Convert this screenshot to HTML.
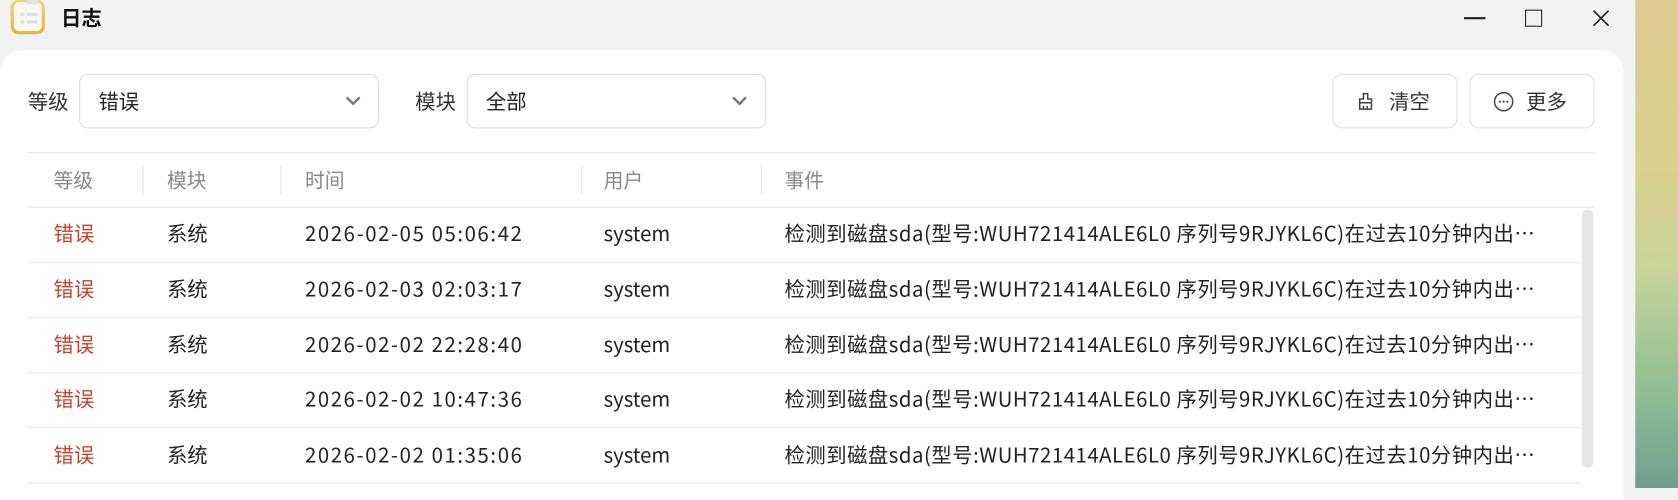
<!DOCTYPE html>
<html><head><meta charset="utf-8"><style>
html,body{margin:0;padding:0;width:1678px;height:488px;overflow:hidden;background:#f2f2f2}
#s{position:absolute;left:0;top:0;width:1568px;height:456px;transform:scale(1.0702);transform-origin:0 0;font-family:"Noto Sans CJK SC","Liberation Sans",sans-serif}
.a{position:absolute}
.wall{left:1528px;top:0;width:40px;height:456px;background:linear-gradient(180deg,#dccb92 0%,#d9cf8e 35%,#c9d39a 55%,#8fbf93 80%,#6f9e92 100%)}
.card{left:0;top:47px;width:1517px;height:420px;background:#fff;border-radius:20px 20px 0 0}
.dd{height:51px;border:1px solid #d9d9d9;border-radius:8px;background:#fff;box-sizing:border-box}
.btn{height:51px;border:1px solid #dcdcdc;border-radius:9px;box-sizing:border-box}
.t{font-size:19px;line-height:26px;color:#222;white-space:nowrap}
.h{font-size:18.5px;line-height:26px;color:#888}
.d{letter-spacing:1.5px}
.e{letter-spacing:0.5px}
.line{height:1px;background:#e8e8e8}
.div{width:1px;height:27px;top:155px;background:#e3e3e3}
.r{color:#c8402f}
</style></head><body><div id="s">
<div class="a wall"></div>
<div class="a" style="left:10px;top:0;width:32px;height:32px;border-radius:7px;background:linear-gradient(#f1d07f,#e4b34c)"></div>
<div class="a" style="left:13px;top:2px;width:26px;height:27px;border-radius:5px;background:#fbf8f2"></div>
<div class="a" style="left:24px;top:0;width:12px;height:4px;border-radius:2px;background:#dfe4ee"></div>
<div class="a" style="left:19px;top:12px;width:4px;height:3px;background:#d6ddec"></div>
<div class="a" style="left:25px;top:12px;width:10px;height:3px;background:#d6ddec"></div>
<div class="a" style="left:19px;top:19px;width:4px;height:3px;background:#d6ddec"></div>
<div class="a" style="left:25px;top:19px;width:10px;height:3px;background:#d6ddec"></div>
<div class="a" style="left:57px;top:4px;font-size:19px;line-height:26px;font-weight:bold;color:#111">日志</div>
<div class="a" style="left:1368px;top:16px;width:20px;height:2px;background:#222"></div>
<div class="a" style="left:1425px;top:9px;width:14px;height:14px;border:1.6px solid #222"></div>
<svg class="a" style="left:1488px;top:9px" width="16" height="16"><path d="M1 1L15 15M15 1L1 15" stroke="#222" stroke-width="1.6"/></svg>
<div class="a card"></div>
<div class="a t" style="left:26px;top:82px;color:#333">等级</div>
<div class="a dd" style="left:74px;top:69px;width:280px"></div>
<div class="a t" style="left:92px;top:82px">错误</div>
<svg class="a" style="left:322px;top:89px" width="16" height="10"><path d="M2 2L8 8L14 2" fill="none" stroke="#777" stroke-width="2.2"/></svg>
<div class="a t" style="left:388px;top:82px;color:#333">模块</div>
<div class="a dd" style="left:436px;top:69px;width:280px"></div>
<div class="a t" style="left:454px;top:82px">全部</div>
<svg class="a" style="left:683px;top:89px" width="16" height="10"><path d="M2 2L8 8L14 2" fill="none" stroke="#777" stroke-width="2.2"/></svg>
<div class="a btn" style="left:1245px;top:69px;width:117px"></div>
<svg class="a" style="left:1268px;top:86px" width="16" height="18"><path d="M6 1.5h4v5h3.5v9.5H2.5V6.5H6z M2.5 10h11 M6 16v-3M9.5 16v-3" fill="none" stroke="#444" stroke-width="1.4"/></svg>
<div class="a t" style="left:1298px;top:82px;color:#333">清空</div>
<div class="a btn" style="left:1373px;top:69px;width:117px"></div>
<svg class="a" style="left:1395px;top:85px" width="20" height="20"><circle cx="10" cy="10" r="8.5" fill="none" stroke="#444" stroke-width="1.4"/><circle cx="6.5" cy="10" r="1" fill="#444"/><circle cx="10" cy="10" r="1" fill="#444"/><circle cx="13.5" cy="10" r="1" fill="#444"/></svg>
<div class="a t" style="left:1426px;top:82px;color:#333">更多</div>
<div class="a line" style="left:26px;top:142px;width:1464px"></div>
<div class="a line" style="left:26px;top:193px;width:1464px;background:#e2e2e2"></div>
<div class="a div" style="left:133px"></div><div class="a div" style="left:262px"></div><div class="a div" style="left:543px"></div><div class="a div" style="left:711px"></div>
<div class="a h" style="left:50px;top:155px">等级</div>
<div class="a h" style="left:156px;top:155px">模块</div>
<div class="a h" style="left:285px;top:155px">时间</div>
<div class="a h" style="left:564px;top:155px">用户</div>
<div class="a h" style="left:733px;top:155px">事件</div>
<div class="a" style="left:1478px;top:196px;width:11px;height:241px;border-radius:6px;background:#e6e6e6"></div>

<div class="a t r" style="left:50px;top:205px">错误</div><div class="a t" style="left:156px;top:205px">系统</div><div class="a t d" style="left:285px;top:205px">2026-02-05 05:06:42</div><div class="a t" style="left:564px;top:205px">system</div><div class="a t e" style="left:733px;top:205px">检测到磁盘sda(型号:WUH721414ALE6L0 序列号9RJYKL6C)在过去10分钟内出…</div>
<div class="a line" style="left:26px;top:245px;width:1451px"></div>
<div class="a t r" style="left:50px;top:257px">错误</div><div class="a t" style="left:156px;top:257px">系统</div><div class="a t d" style="left:285px;top:257px">2026-02-03 02:03:17</div><div class="a t" style="left:564px;top:257px">system</div><div class="a t e" style="left:733px;top:257px">检测到磁盘sda(型号:WUH721414ALE6L0 序列号9RJYKL6C)在过去10分钟内出…</div>
<div class="a line" style="left:26px;top:296px;width:1451px"></div>
<div class="a t r" style="left:50px;top:309px">错误</div><div class="a t" style="left:156px;top:309px">系统</div><div class="a t d" style="left:285px;top:309px">2026-02-02 22:28:40</div><div class="a t" style="left:564px;top:309px">system</div><div class="a t e" style="left:733px;top:309px">检测到磁盘sda(型号:WUH721414ALE6L0 序列号9RJYKL6C)在过去10分钟内出…</div>
<div class="a line" style="left:26px;top:348px;width:1451px"></div>
<div class="a t r" style="left:50px;top:360px">错误</div><div class="a t" style="left:156px;top:360px">系统</div><div class="a t d" style="left:285px;top:360px">2026-02-02 10:47:36</div><div class="a t" style="left:564px;top:360px">system</div><div class="a t e" style="left:733px;top:360px">检测到磁盘sda(型号:WUH721414ALE6L0 序列号9RJYKL6C)在过去10分钟内出…</div>
<div class="a line" style="left:26px;top:399px;width:1451px"></div>
<div class="a t r" style="left:50px;top:412px">错误</div><div class="a t" style="left:156px;top:412px">系统</div><div class="a t d" style="left:285px;top:412px">2026-02-02 01:35:06</div><div class="a t" style="left:564px;top:412px">system</div><div class="a t e" style="left:733px;top:412px">检测到磁盘sda(型号:WUH721414ALE6L0 序列号9RJYKL6C)在过去10分钟内出…</div>
<div class="a line" style="left:26px;top:451px;width:1451px"></div>
</div></body></html>
